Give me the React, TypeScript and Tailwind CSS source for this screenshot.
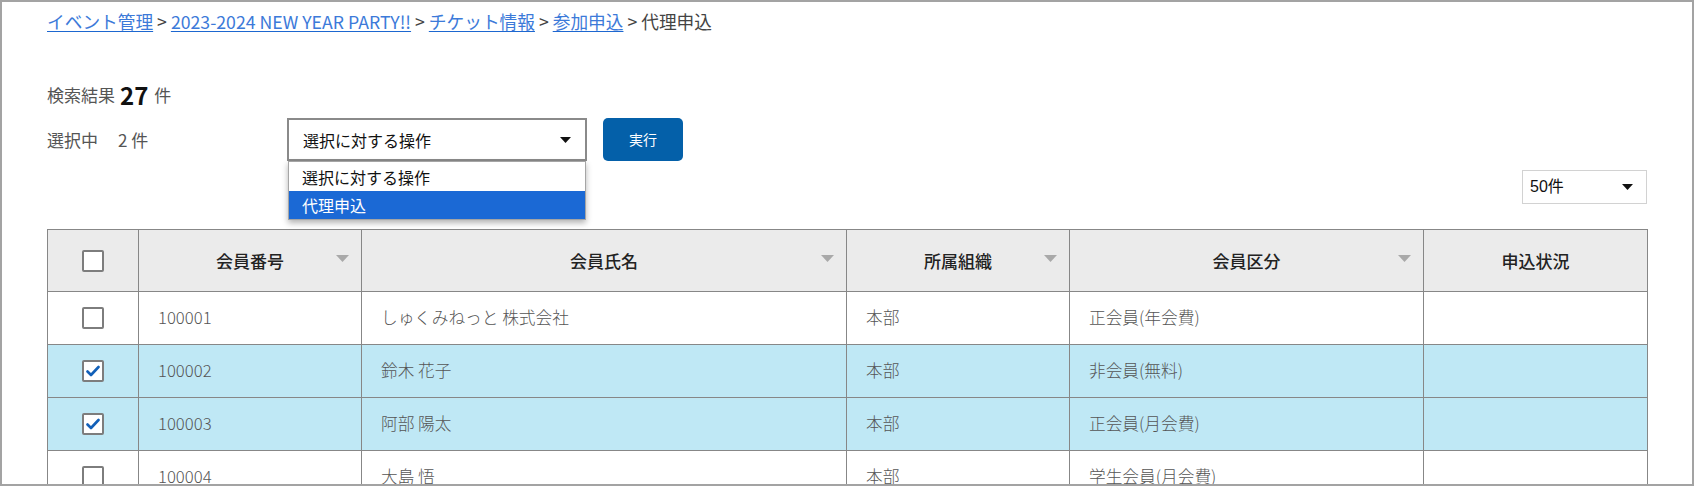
import React from "react";

const font = { fontFamily: '"Noto Sans CJK JP", "Noto Sans", sans-serif' };

type Row = { id: string; name: string; org: string; kind: string; status: string; checked: boolean };

const rows: Row[] = [
  { id: "100001", name: "しゅくみねっと 株式会社", org: "本部", kind: "正会員(年会費)", status: "", checked: false },
  { id: "100002", name: "鈴木 花子", org: "本部", kind: "非会員(無料)", status: "", checked: true },
  { id: "100003", name: "阿部 陽太", org: "本部", kind: "正会員(月会費)", status: "", checked: true },
  { id: "100004", name: "大島 悟", org: "本部", kind: "学生会員(月会費)", status: "", checked: false },
];

const crumbs = ["イベント管理", "2023-2024 NEW YEAR PARTY!!", "チケット情報", "参加申込"];

function Checkbox({ checked }: { checked: boolean }) {
  return (
    <span className="mx-auto flex h-[22px] w-[22px] items-center justify-center rounded-[2px] border-2 border-[#7d7d7d] bg-white">
      {checked && (
        <svg width="14" height="12" viewBox="0 0 14 12">
          <path d="M1.5 6.5 L5 10 L12.5 2" fill="none" stroke="#1260b8" strokeWidth="2.6" strokeLinecap="round" strokeLinejoin="round" />
        </svg>
      )}
    </span>
  );
}

function SortArrow() {
  return (
    <svg className="absolute right-[12px] top-[25px]" width="13" height="7" viewBox="0 0 13 7">
      <path d="M0 0 H13 L6.5 7 Z" fill="#a9a9a9" />
    </svg>
  );
}

function Caret() {
  return (
    <svg width="11" height="6" viewBox="0 0 11 6">
      <path d="M0 0 H11 L5.5 6 Z" fill="#111" />
    </svg>
  );
}

const headers = [
  { label: "", sort: false },
  { label: "会員番号", sort: true },
  { label: "会員氏名", sort: true },
  { label: "所属組織", sort: true },
  { label: "会員区分", sort: true },
  { label: "申込状況", sort: false },
];

export default function App() {
  return (
    <div style={font} className="h-[486px] overflow-hidden border-2 border-[#a3a3a3] bg-white px-[45px]">
      <nav className="mt-[6px] text-[17.7px] leading-[26px] text-[#444]">
        {crumbs.map((c) => (
          <span key={c}>
            <a href="#" className="text-[#3c7ad9] underline decoration-[#1d67d0] underline-offset-2">
              {c}
            </a>
            <span> &gt; </span>
          </span>
        ))}
        <span>代理申込</span>
      </nav>

      <div className="mt-[46px] flex h-[30px] items-center text-[17px] text-[#555]">
        <span>検索結果</span>
        <span className="ml-[5px] text-[24px] font-bold text-[#111]">27</span>
        <span className="ml-[6px]">件</span>
      </div>

      <div className="mt-[8px] flex items-center">
        <div className="flex w-[240px] text-[17px] text-[#555]">
          <span>選択中</span>
          <span className="ml-[20px]">2 件</span>
        </div>
        <div className="relative">
          <div className="flex h-[43px] w-[300px] items-center justify-between border-2 border-[#8a8a8a] bg-white pl-[14px] pr-[14px] text-[16px] text-[#111]">
            <span>選択に対する操作</span>
            <Caret />
          </div>
          <div className="absolute left-[1px] top-[43px] z-10 w-[298px] border border-[#a5a5a5] bg-white text-[16px] shadow-[0_3px_6px_rgba(0,0,0,0.3)]">
            <div className="flex h-[29px] items-center pl-[13px] text-[#111]">選択に対する操作</div>
            <div className="flex h-[28px] items-center bg-[#1b69d5] pl-[13px] text-white">代理申込</div>
          </div>
        </div>
        <button className="ml-[16px] h-[43px] w-[80px] rounded-[5px] bg-[#0460a9] text-[14px] text-white">実行</button>
      </div>

      <div className="mt-[9px] flex justify-end">
        <div className="flex h-[34px] w-[125px] items-center justify-between border border-[#d2d2d2] bg-white pl-[7px] pr-[13px] text-[16px] text-[#111]">
          <span style={{ fontFamily: '"Liberation Sans", "Noto Sans CJK JP", sans-serif' }}>50件</span>
          <Caret />
        </div>
      </div>

      <table className="mt-[25px] w-[1600px] table-fixed border-collapse">
        <colgroup>
          <col className="w-[91px]" />
          <col className="w-[223px]" />
          <col className="w-[485px]" />
          <col className="w-[223px]" />
          <col className="w-[354px]" />
          <col className="w-[224px]" />
        </colgroup>
        <thead>
          <tr className="h-[62px] bg-[#ebebeb]">
            {headers.map((h, i) => (
              <th key={i} className="relative border border-[#878787] text-center text-[17px] font-medium text-[#222]">
                {i === 0 ? <Checkbox checked={false} /> : h.label}
                {h.sort && <SortArrow />}
              </th>
            ))}
          </tr>
        </thead>
        <tbody className="text-[16.7px] font-light text-[#555]">
          {rows.map((r) => (
            <tr key={r.id} className={r.checked ? "h-[53px] bg-[#bfe8f5]" : "h-[53px] bg-white"}>
              <td className="border border-[#878787]">
                <Checkbox checked={r.checked} />
              </td>
              <td className="border border-[#878787] pl-[19px]">{r.id}</td>
              <td className="border border-[#878787] pl-[19px]">{r.name}</td>
              <td className="border border-[#878787] pl-[19px]">{r.org}</td>
              <td className="border border-[#878787] pl-[19px]">{r.kind}</td>
              <td className="border border-[#878787] pl-[19px]">{r.status}</td>
            </tr>
          ))}
        </tbody>
      </table>
    </div>
  );
}
